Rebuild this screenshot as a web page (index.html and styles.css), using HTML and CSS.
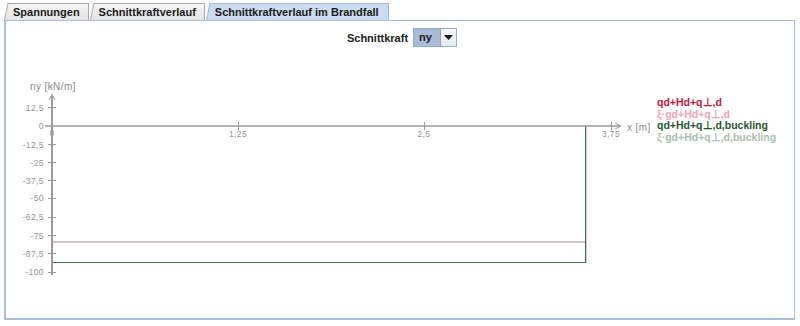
FILE: index.html
```html
<!DOCTYPE html>
<html lang="de">
<head>
<meta charset="utf-8">
<title>Schnittkraftverlauf im Brandfall</title>
<link rel="stylesheet" href="styles.css">
</head>
<body>
<div class="tabs">
  <div class="tab">Spannungen</div>
  <div class="tab">Schnittkraftverlauf</div>
  <div class="tab tab-active">Schnittkraftverlauf im Brandfall</div>
</div>
<div class="panel">
  <div class="toolbar">
    <span class="label">Schnittkraft</span>
    <div class="combo">
      <span class="combo-value">ny</span>
      <span class="combo-btn"><svg width="9" height="5" viewBox="0 0 9 5"><path d="M0 0H9L4.5 5Z" fill="#111"/></svg></span>
    </div>
  </div>
  <svg class="chart" width="788" height="271" viewBox="0 0 788 271">
    <g transform="translate(-6,-47)">
      <!-- data -->
      <line x1="53" y1="242" x2="585" y2="242" stroke="#a58585" stroke-width="1"/>
      <line x1="53" y1="262.5" x2="585" y2="262.5" stroke="#3f6f4e" stroke-width="1"/>
      <line x1="586.5" y1="126" x2="586.5" y2="263" stroke="#cad9ce" stroke-width="1"/>
      <line x1="585.5" y1="126" x2="585.5" y2="263" stroke="#3f6f4e" stroke-width="1"/>
      <!-- x axis -->
      <line x1="45" y1="126" x2="620" y2="126" stroke="#9a9a9a" stroke-width="1.5"/>
      <polyline points="615,123 621,126 615,129" fill="none" stroke="#9a9a9a" stroke-width="1"/>
      <g stroke="#9a9a9a" stroke-width="1">
        <line x1="238.5" y1="122" x2="238.5" y2="130"/>
        <line x1="424.5" y1="122" x2="424.5" y2="130"/>
        <line x1="611.5" y1="122" x2="611.5" y2="130"/>
      </g>
      <g class="tick" text-anchor="middle">
        <text x="52" y="136">0</text>
        <text x="238" y="137">1,25</text>
        <text x="424" y="137">2,5</text>
        <text x="611" y="137">3,75</text>
      </g>
      <text class="axis-title" x="627" y="131">x [m]</text>
      <!-- y axis -->
      <line x1="52" y1="275" x2="52" y2="96" stroke="#9a9a9a" stroke-width="2"/>
      <polyline points="49,100 52,94 55,100" fill="none" stroke="#9a9a9a" stroke-width="1"/>
      <g stroke="#9a9a9a" stroke-width="1">
        <line x1="48" y1="107.5" x2="56" y2="107.5"/>
        <line x1="48" y1="144.5" x2="56" y2="144.5"/>
        <line x1="48" y1="162.5" x2="56" y2="162.5"/>
        <line x1="48" y1="180.5" x2="56" y2="180.5"/>
        <line x1="48" y1="198.5" x2="56" y2="198.5"/>
        <line x1="48" y1="217.5" x2="56" y2="217.5"/>
        <line x1="48" y1="235.5" x2="56" y2="235.5"/>
        <line x1="48" y1="253.5" x2="56" y2="253.5"/>
        <line x1="48" y1="272.5" x2="56" y2="272.5"/>
      </g>
      <g class="tick" text-anchor="end">
        <text x="44" y="111">12,5</text>
        <text x="44" y="129">0</text>
        <text x="44" y="148">-12,5</text>
        <text x="44" y="166">-25</text>
        <text x="44" y="184">-37,5</text>
        <text x="44" y="201">-50</text>
        <text x="44" y="220">-62,5</text>
        <text x="44" y="239">-75</text>
        <text x="44" y="257">-87,5</text>
        <text x="44" y="275">-100</text>
      </g>
      <text class="axis-title" x="30" y="90">ny [kN/m]</text>
      <!-- legend -->
      <g class="legend">
        <text x="657" y="106" fill="#c0173f">qd+Hd+q⊥,d</text>
        <text x="657" y="118" fill="#eba3b4">ξ·gd+Hd+q⊥,d</text>
        <text x="657" y="129" fill="#1f5632">qd+Hd+q⊥,d,buckling</text>
        <text x="657" y="141" fill="#a9c0b1">ξ·gd+Hd+q⊥,d,buckling</text>
      </g>
    </g>
  </svg>
</div>
</body>
</html>
```
FILE: styles.css
```css
html, body {
  margin: 0;
  padding: 0;
  background: #ffffff;
}
body {
  width: 800px;
  height: 326px;
  overflow: hidden;
  font-family: "Liberation Sans", Arial, sans-serif;
  color: #222;
}
.tabs {
  display: flex;
  padding: 3px 0 0 9px;
  height: 17px;
  gap: 6px;
}
.tab {
  position: relative;
  z-index: 0;
  font-size: 11px;
  font-weight: bold;
  line-height: 16px;
  padding: 0 8px 0 4px;
  border-top: 1px solid #a8a8a8;
  border-right: 1px solid #a8a8a8;
  background: linear-gradient(#f5f5f5, #e3e3e3);
  color: #1a1a1a;
}
.tab::before {
  content: "";
  position: absolute;
  top: -1px;
  bottom: 0;
  left: -5px;
  width: 10px;
  border-top: 1px solid #a8a8a8;
  border-left: 1px solid #a8a8a8;
  background: linear-gradient(#f5f5f5, #e3e3e3);
  transform: skewX(-12deg);
  transform-origin: bottom left;
  z-index: -1;
}
.tab-active {
  background: #cbdbf0;
  border-color: #9fb8da;
  padding-right: 9px;
}
.tab-active::before {
  background: #cbdbf0;
  border-color: #9fb8da;
}
.panel {
  margin-left: 4px;
  width: 788px;
  height: 297px;
  border: 1px solid #a6bee0;
  border-left-width: 2px;
  border-bottom-width: 2px;
  background: #fff;
}
.toolbar {
  display: flex;
  justify-content: center;
  align-items: center;
  gap: 5px;
  padding-top: 7px;
  height: 19px;
  padding-left: 4px;
}
.label {
  font-size: 11px;
  font-weight: bold;
}
.combo {
  display: flex;
  height: 19px;
  box-sizing: border-box;
}
.combo-value {
  width: 28px;
  box-sizing: border-box;
  background: #a9bcd5;
  border: 1px solid #91a7c5;
  font-size: 11px;
  font-weight: bold;
  line-height: 17px;
  padding-left: 5px;
  color: #1a1a1a;
}
.combo-btn {
  width: 16px;
  box-sizing: border-box;
  border: 1px solid #9aaec8;
  border-left: none;
  background: linear-gradient(#f6f8fb, #e4eaf2);
  display: flex;
  align-items: center;
  justify-content: center;
}
.chart {
  display: block;
}
.tick {
  font-family: "Liberation Sans", Arial, sans-serif;
  font-size: 8.5px;
  letter-spacing: 0.4px;
  fill: #939393;
}
.axis-title {
  font-family: "Liberation Sans", Arial, sans-serif;
  font-size: 10px;
  letter-spacing: 0.4px;
  fill: #8a8a8a;
}
.legend {
  font-family: "Liberation Sans", Arial, sans-serif;
  font-size: 10.5px;
  font-weight: bold;
}
```
